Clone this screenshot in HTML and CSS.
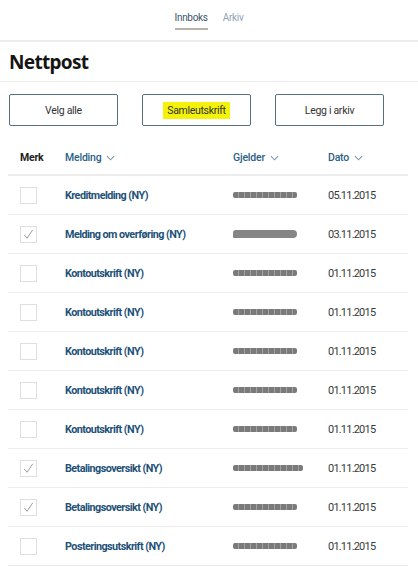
FILE: index.html
```html
<!DOCTYPE html>
<html lang="no">
<head>
    <meta charset="UTF-8">
    <meta name="viewport" content="width=device-width, initial-scale=1.0">
    <title>Nettpost</title>
    <link rel="stylesheet" href="styles.css">
</head>
<body>
    <nav class="tabs">
        <a class="tab active">Innboks</a>
        <a class="tab">Arkiv</a>
    </nav>

    <h1>Nettpost</h1>

    <div class="actions">
        <button class="btn">Velg alle</button>
        <button class="btn"><span class="highlight">Samleutskrift</span></button>
        <button class="btn">Legg i arkiv</button>
    </div>

    <div class="mail-list">
        <div class="mail-row head">
            <span class="merk">Merk</span>
            <span class="sort">Melding <svg viewBox="0 0 10 6"><path d="M1 1l4 4 4-4"/></svg></span>
            <span class="sort">Gjelder <svg viewBox="0 0 10 6"><path d="M1 1l4 4 4-4"/></svg></span>
            <span class="sort">Dato <svg viewBox="0 0 10 6"><path d="M1 1l4 4 4-4"/></svg></span>
        </div>

        <div class="mail-row">
            <span class="check"></span>
            <span class="title">Kreditmelding (NY)</span>
            <span class="redacted dotted"></span>
            <span class="date">05.11.2015</span>
        </div>
        <div class="mail-row">
            <span class="check on"><svg viewBox="0 0 16 16"><path d="M3.5 8.5l3 3.5 6-9"/></svg></span>
            <span class="title">Melding om overføring (NY)</span>
            <span class="redacted smooth"></span>
            <span class="date">03.11.2015</span>
        </div>
        <div class="mail-row">
            <span class="check"></span>
            <span class="title">Kontoutskrift (NY)</span>
            <span class="redacted dotted"></span>
            <span class="date">01.11.2015</span>
        </div>
        <div class="mail-row">
            <span class="check"></span>
            <span class="title">Kontoutskrift (NY)</span>
            <span class="redacted dotted"></span>
            <span class="date">01.11.2015</span>
        </div>
        <div class="mail-row">
            <span class="check"></span>
            <span class="title">Kontoutskrift (NY)</span>
            <span class="redacted dotted"></span>
            <span class="date">01.11.2015</span>
        </div>
        <div class="mail-row">
            <span class="check"></span>
            <span class="title">Kontoutskrift (NY)</span>
            <span class="redacted dotted"></span>
            <span class="date">01.11.2015</span>
        </div>
        <div class="mail-row">
            <span class="check"></span>
            <span class="title">Kontoutskrift (NY)</span>
            <span class="redacted dotted"></span>
            <span class="date">01.11.2015</span>
        </div>
        <div class="mail-row">
            <span class="check on"><svg viewBox="0 0 16 16"><path d="M3.5 8.5l3 3.5 6-9"/></svg></span>
            <span class="title">Betalingsoversikt (NY)</span>
            <span class="redacted dotted wide"></span>
            <span class="date">01.11.2015</span>
        </div>
        <div class="mail-row">
            <span class="check on"><svg viewBox="0 0 16 16"><path d="M3.5 8.5l3 3.5 6-9"/></svg></span>
            <span class="title">Betalingsoversikt (NY)</span>
            <span class="redacted dotted"></span>
            <span class="date">01.11.2015</span>
        </div>
        <div class="mail-row">
            <span class="check"></span>
            <span class="title">Posteringsutskrift (NY)</span>
            <span class="redacted dotted"></span>
            <span class="date">01.11.2015</span>
        </div>
    </div>
</body>
</html>
```

FILE: styles.css
```css
body {
    margin: 0;
    background: white;
    font-family: Roboto, "Liberation Sans", Arial, sans-serif;
    color: #2b2b2b;
    overflow: hidden;
}

.tabs {
    display: flex;
    justify-content: center;
    gap: 15px;
    border-bottom: 2px solid #ececec;
    box-sizing: border-box;
    height: 42px;
}

.tab {
    font-size: 10px;
    letter-spacing: -0.3px;
    color: #8fa3b2;
    padding-top: 12px;
    height: 16px;
}

.tab.active {
    color: #3c566a;
    border-bottom: 2px solid #b8b2aa;
}

h1 {
    margin: 0;
    padding: 7px 9px 0;
    box-sizing: border-box;
    height: 40px;
    font-family: "Noto Sans", "Open Sans", sans-serif;
    font-size: 19px;
    letter-spacing: -0.7px;
    font-weight: bold;
    color: #151515;
    border-bottom: 1px solid #ececec;
}

.actions {
    display: flex;
    gap: 24px;
    padding: 12px 9px;
}

.btn {
    width: 109px;
    height: 32px;
    background: white;
    border: 1px solid #56707e;
    border-radius: 2px;
    font-family: inherit;
    font-size: 10.5px;
    letter-spacing: -0.3px;
    color: #333;
    padding: 0;
}

.highlight {
    background: #f4f20a;
    padding: 2px 4px;
}

.mail-list {
    margin: 3px 10px 0 8px;
}

.mail-row {
    display: grid;
    grid-template-columns: 45px 168px 95px 1fr;
    align-items: center;
    height: 38px;
    padding-left: 12px;
    border-bottom: 1px solid #ececec;
}

.mail-row.head {
    height: 33px;
    border-bottom: 2px solid #ececec;
}

.merk {
    font-size: 10.5px;
    font-weight: bold;
    color: #222;
    letter-spacing: -0.2px;
}

.sort {
    display: flex;
    align-items: center;
    gap: 5px;
    font-size: 10.5px;
    font-weight: 500;
    letter-spacing: -0.2px;
    color: #2b5f86;
}

.sort svg {
    width: 9px;
    height: 6px;
    fill: none;
    stroke: #7d97aa;
    stroke-width: 1.2;
}

.check {
    width: 15px;
    height: 15px;
    border: 1px solid #dedede;
    display: block;
}

.check svg {
    width: 15px;
    height: 15px;
    fill: none;
    stroke: #8a8a8a;
    stroke-width: 0.9;
}

.title {
    font-size: 10.8px;
    font-weight: bold;
    letter-spacing: -0.55px;
    color: #1e5178;
}

.redacted {
    display: block;
    width: 64px;
    height: 7px;
    background: #8c8c8c;
    border-radius: 2px;
}

.redacted.dotted {
    background: repeating-linear-gradient(90deg, #7a7a7a 0 5px, #a3a3a3 5px 6px);
    height: 6px;
}

.redacted.wide {
    width: 70px;
}

.redacted.smooth {
    height: 8px;
    border-radius: 4px 6px 6px 2px;
    background: #858585;
}

.date {
    font-size: 11px;
    letter-spacing: -0.8px;
    color: #3a3a3a;
}
```
